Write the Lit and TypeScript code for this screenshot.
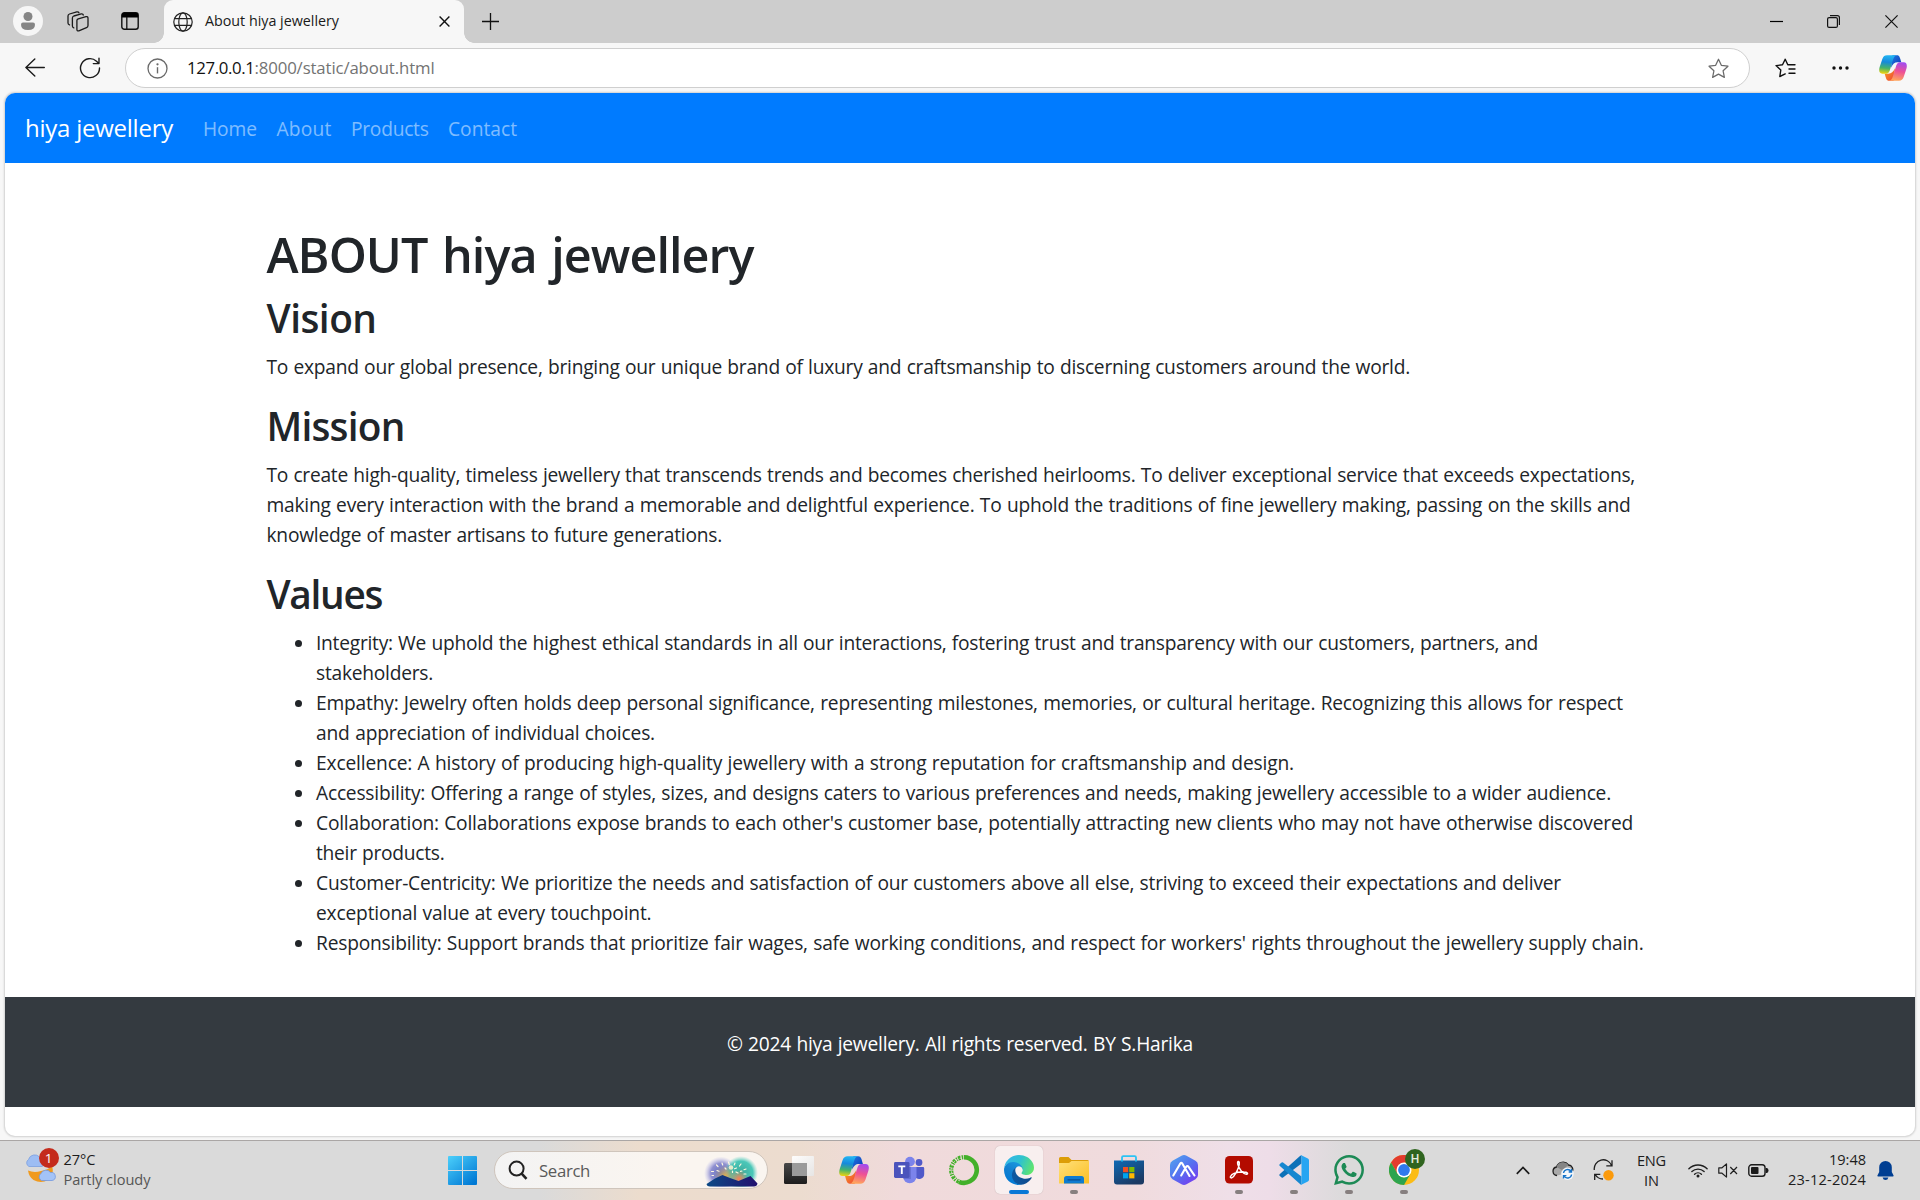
import { LitElement, html, css, TemplateResult } from "lit";

/** Text run that spreads its letters so that the run takes a given width. */
class FitText extends LitElement {
  static properties = { w: { type: Number } };
  declare w: number;
  static styles = css`
    :host { display: inline-block; white-space: nowrap; }
    .run { display: inline-block; white-space: nowrap; }
  `;
  firstUpdated() {
    const run = this.renderRoot.querySelector(".run") as HTMLElement;
    const n = (this.textContent || "").length;
    const natural = run.getBoundingClientRect().width;
    if (this.w && n) this.style.letterSpacing = `${(this.w - natural) / n}px`;
  }
  render() {
    return html`<span class="run"><slot></slot></span>`;
  }
}
customElements.define("fit-text", FitText);

const t = (text: string, w: number) => html`<fit-text w=${w}>${text}</fit-text>`;

const copilot = (id: string, w: number, h: number) => html`
  <svg width=${w} height=${h} viewBox="0 0 84 78" preserveAspectRatio="none">
    <defs>
      <linearGradient id="${id}a" x1="0.3" y1="0" x2="0.2" y2="1">
        <stop offset="0" stop-color="#22b4f2" /><stop offset=".35" stop-color="#1689dc" />
        <stop offset=".68" stop-color="#45b36b" /><stop offset="1" stop-color="#f6d50a" />
      </linearGradient>
      <linearGradient id="${id}b" x1="0.7" y1="0" x2="0.5" y2="1">
        <stop offset="0" stop-color="#a04cf2" /><stop offset=".5" stop-color="#ee5096" />
        <stop offset="1" stop-color="#ffa45c" />
      </linearGradient>
      <linearGradient id="${id}c" x1="0" y1="0" x2="1" y2="1">
        <stop offset="0" stop-color="#1e7ae0" /><stop offset="1" stop-color="#0f35b8" />
      </linearGradient>
      <linearGradient id="${id}d" x1="0" y1="0" x2="1" y2="1">
        <stop offset="0" stop-color="#f8a020" /><stop offset="1" stop-color="#ee4438" />
      </linearGradient>
    </defs>
    <path fill="url(#${id}c)" d="M40 1H54C62 1 63 9 67 22H56C46 22 42 27 36 38Z" />
    <path fill="url(#${id}d)" d="M44 77H30C22 77 21 69 17 56H28C38 56 42 51 48 40Z" />
    <path fill="url(#${id}a)" d="M24 1H52C45 3 43 12 39 25L32 47C29 55 25 56 18 56H10C0 56-1 46 2 36L10 12C13 4 17 1 24 1Z" />
    <path fill="url(#${id}b)" d="M60 77H32C39 75 41 66 45 53L52 31C55 23 59 22 66 22H74C84 22 85 32 82 42L74 66C71 74 67 77 60 77Z" />
  </svg>`;

const STAR = "M10 1.2 12.7 7 19 7.8 14.4 12.2 15.6 18.5 10 15.4 4.4 18.5 5.6 12.2 1 7.8 7.3 7Z";

const apps: { icon: TemplateResult; state?: string }[] = [
  {
    icon: html`<svg width="32" height="32" viewBox="0 0 32 32">
      <defs>
        <linearGradient id="tvb" x1="0" y1="0" x2="0" y2="1"><stop offset="0" stop-color="#484848" /><stop offset="1" stop-color="#1d1d1d" /></linearGradient>
        <linearGradient id="tvw" x1="0" y1="0" x2="1" y2="1"><stop offset="0" stop-color="#fff" /><stop offset="1" stop-color="#e6e6e6" /></linearGradient>
      </defs>
      <rect x="1" y="9" width="23" height="21" rx="1.5" fill="url(#tvb)" />
      <rect x="9" y="2" width="22" height="20" rx="1" fill="url(#tvw)" opacity=".93" />
      <path d="M9 9H24V22H10Q9 22 9 21Z" fill="#9b9b9b" />
    </svg>`,
  },
  { icon: html`${copilot("cb", 30, 28)}` },
  {
    icon: html`<svg width="32" height="32" viewBox="0 0 32 32">
      <circle cx="26" cy="8.5" r="3.4" fill="#5059c9" />
      <path d="M22 13h8q1.2 0 1.2 1.2V20a5 5 0 0 1-9 3Z" fill="#5059c9" />
      <circle cx="17" cy="7.6" r="4.9" fill="#7b83eb" />
      <path d="M10 13h13.5v9.5a6.7 6.7 0 0 1-13.5 0Z" fill="#7b83eb" />
      <path d="M10 13h8v12H10.6Z" fill="#5a62c3" opacity=".6" />
      <rect x="1" y="8" width="15.5" height="16" rx="1.4" fill="#4b53bc" />
      <path d="M5.3 12.400h7M8.800 12v8" stroke="#fff" stroke-width="1.900" fill="none" />
    </svg>`,
  },
  {
    icon: html`<svg width="32" height="32" viewBox="0 0 32 32">
      <path d="M16 3.200A12.800 12.800 0 1 1 11 27.800" fill="none" stroke="#43b02a" stroke-width="4.600" />
      <path d="M11 27.800A12.800 12.800 0 0 1 16 3.200" fill="none" stroke="#43b02a" stroke-width="4.200" stroke-dasharray="2.600 1.100 1.300 .8" />
      <path d="M11.500 26.500A11.500 11.500 0 0 1 14 4" fill="none" stroke="#f0dedc" stroke-width="1" stroke-dasharray="1.500 2.200" />
    </svg>`,
  },
  {
    state: "active",
    icon: html`<svg width="30" height="30" viewBox="0 0 256 256">
      <defs>
        <linearGradient id="e1" x1="0" y1=".5" x2="1" y2=".5"><stop offset="0" stop-color="#0c59a4" /><stop offset="1" stop-color="#114a8b" /></linearGradient>
        <linearGradient id="e2" x1=".8" y1="0" x2=".3" y2="1"><stop offset="0" stop-color="#1b9de2" /><stop offset=".5" stop-color="#1280d0" /><stop offset="1" stop-color="#0078d4" /></linearGradient>
        <linearGradient id="e3" x1="0" y1=".3" x2="1" y2=".6"><stop offset="0" stop-color="#35b5ea" /><stop offset=".5" stop-color="#2fc2cf" /><stop offset="1" stop-color="#60e56c" /></linearGradient>
      </defs>
      <path fill="url(#e1)" d="M231 190.500c-3.400 1.800-6.900 3.400-10.500 4.700a101.900 101.900 0 0 1-35.900 6.400c-47.300 0-88.500-32.500-88.500-74.300 0-11.400 6.400-21.900 16.400-27.300-42.800 1.800-53.800 46.400-53.800 72.500 0 74 68.100 81.400 82.800 81.400 7.900 0 19.800-2.300 27-4.600l1.300-.4a128.300 128.300 0 0 0 66.600-52.800 4 4 0 0 0-5.400-5.600z" />
      <path fill="url(#e2)" d="M105.700 241.400a79.200 79.200 0 0 1-22.700-21.300 80.700 80.700 0 0 1 29.500-120c3.200-1.500 8.500-4.100 15.600-4a32.400 32.400 0 0 1 25.700 13 31.900 31.900 0 0 1 6.300 18.700c0-.2 24.500-79.600-80-79.600-43.900 0-80 41.600-80 78.200a130.200 130.200 0 0 0 12.100 56 128 128 0 0 0 156.400 67 75.500 75.500 0 0 1-62.800-8z" />
      <path fill="url(#e3)" d="M152.300 148.900c-.9 1-3.400 2.500-3.400 5.600 0 2.600 1.700 5.200 4.800 7.300 14.300 10 41.400 8.600 41.500 8.600a59.600 59.600 0 0 0 30.300-8.300 61.400 61.400 0 0 0 30.400-52.900c.3-22.400-8-37.300-11.300-43.900C223.500 23.900 177.700 0 128 0A128 128 0 0 0 0 126.200c.5-36.500 36.800-66 80-66 3.500 0 23.500.3 42 10.100 16.300 8.600 24.900 19 30.800 29.200 6.200 10.700 7.300 24.100 7.300 29.500 0 5.300-2.700 13.300-7.800 19.900z" />
    </svg>`,
  },
  {
    state: "open",
    icon: html`<svg width="30" height="30" viewBox="0 0 30 30">
      <defs><linearGradient id="fe" x1="0" y1="0" x2="1" y2="1"><stop offset="0" stop-color="#ffe07a" /><stop offset="1" stop-color="#fbbf24" /></linearGradient></defs>
      <path d="M0 3.500Q0 2 1.500 2H9.500L12.500 5H28.500Q30 5 30 6.500V14H0Z" fill="#dc9d08" />
      <path d="M0 8H10L12.500 6H30V28.500H0Z" fill="url(#fe)" />
      <path d="M5 28.500V23.500Q5 21 7.500 21H22.500Q25 21 25 23.500V28.500Z" fill="#0f7bd0" />
      <path d="M9 24.800H21" stroke="#0a4f91" stroke-width="1.300" stroke-linecap="round" />
    </svg>`,
  },
  {
    icon: html`<svg width="30" height="30" viewBox="0 0 30 30">
      <defs><linearGradient id="ms" x1="0" y1="0" x2=".6" y2="1"><stop offset="0" stop-color="#1069b4" /><stop offset="1" stop-color="#1b3a63" /></linearGradient></defs>
      <path d="M8 6V2.500Q8 1.200 9.300 1.200H20.700Q22 1.200 22 2.500V6" fill="none" stroke="#2cc3f4" stroke-width="1.800" />
      <path d="M0 5.500H30V26.500Q30 29.500 27 29.500H3Q0 29.500 0 26.500Z" fill="url(#ms)" />
      <path d="M8 6.500V4.500M22 6.500V4.500" stroke="#2cc3f4" stroke-width="1.800" />
      <path fill="#f25022" d="M9 12h5.200v5.200H9z" /><path fill="#7fba00" d="M15.200 12h5.200v5.200h-5.200z" />
      <path fill="#00a4ef" d="M9 18.200h5.200v5.200H9z" /><path fill="#ffb900" d="M15.200 18.200h5.200v5.200h-5.200z" />
    </svg>`,
  },
  {
    icon: html`<svg width="30" height="30" viewBox="0 0 30 30">
      <defs><linearGradient id="ar" x1=".1" y1="0" x2=".9" y2="1"><stop offset="0" stop-color="#4fa3ee" /><stop offset=".5" stop-color="#5670f0" /><stop offset="1" stop-color="#7a35f0" /></linearGradient></defs>
      <path d="M12.500.7Q15-.6 17.500.7L26.500 5.800Q29 7.200 29 10V20Q29 22.800 26.500 24.200L17.500 29.300Q15 30.600 12.500 29.300L3.500 24.200Q1 22.800 1 20V10Q1 7.200 3.500 5.800Z" fill="url(#ar)" />
      <path d="M4.300 20.500 11.300 8.500Q12.300 7 13.300 8.500L20.500 21M12.200 20.500 17.200 11.800Q18.400 10.200 19.600 11.800L25.500 20.500" fill="none" stroke="#fff" stroke-width="2.100" stroke-linecap="round" stroke-linejoin="round" />
    </svg>`,
  },
  {
    state: "open",
    icon: html`<svg width="30" height="30" viewBox="0 0 30 30">
      <rect x="1" y="1" width="28" height="27.500" rx="4.500" fill="#b30b00" />
      <path d="M6.500 21.500C8 18.500 13.500 16.800 20 17 23.500 17 24.500 19 22.500 19.200 19 19.400 14.800 13.500 13.800 9.300 13.300 7 13.800 6.300 14.500 6.500 16 7 15.400 11 13.200 15.500 11 20 8.800 23 7.300 22.900 6.500 22.800 6.100 22.300 6.500 21.500Z" fill="none" stroke="#fff" stroke-width="1.500" stroke-linejoin="round" />
    </svg>`,
  },
  {
    state: "open",
    icon: html`<svg width="30" height="30" viewBox="0 0 30 30">
      <path d="M22.500.4V8.600L4 22.600Q3.300 23.100 2.600 22.600L.6 20.800Q0 20 .6 19.300L21 .9Z" fill="#0d71b8" />
      <path d="M22.500 29.600V21.400L4 7.400Q3.300 6.900 2.600 7.400L.6 9.200Q0 10 .6 10.700L21 29.100Z" fill="#1687d0" />
      <path d="M22.300 29.700Q21.700 29.800 21 29.200 22.500 29.600 22.500 28V2Q22.500.4 21 .8 21.700.2 22.300.3L28.900 3.500Q30 4 30 5.200V24.800Q30 26 28.900 26.500Z" fill="#27a5f2" />
    </svg>`,
  },
  {
    state: "open",
    icon: html`<svg width="30" height="30" viewBox="0 0 24 24"><path fill="#1c8a55" d="M17.472 14.382c-.297-.149-1.758-.867-2.030-.967-.273-.099-.471-.148-.67.15-.197.297-.767.966-.94 1.164-.173.199-.347.223-.644.075-.297-.15-1.255-.463-2.390-1.475-.883-.788-1.480-1.761-1.653-2.059-.173-.297-.018-.458.13-.606.134-.133.298-.347.446-.52.149-.174.198-.298.298-.497.099-.198.05-.371-.025-.52-.075-.149-.669-1.612-.916-2.207-.242-.579-.487-.5-.669-.51-.173-.008-.371-.01-.57-.01-.198 0-.52.074-.792.372-.272.297-1.040 1.016-1.040 2.479 0 1.462 1.065 2.875 1.213 3.074.149.198 2.096 3.200 5.077 4.487.709.306 1.262.489 1.694.625.712.227 1.360.195 1.871.118.571-.085 1.758-.719 2.006-1.413.248-.694.248-1.289.173-1.413-.074-.124-.272-.198-.57-.347m-5.421 7.403h-.004a9.870 9.870 0 01-5.031-1.378l-.361-.214-3.741.982.998-3.648-.235-.374a9.860 9.860 0 01-1.510-5.260c.001-5.450 4.436-9.884 9.888-9.884 2.640 0 5.122 1.030 6.988 2.898a9.825 9.825 0 012.893 6.994c-.003 5.450-4.437 9.884-9.885 9.884m8.413-18.297A11.815 11.815 0 0012.050 0C5.495 0 .16 5.335.157 11.892c0 2.096.547 4.142 1.588 5.945L.057 24l6.305-1.654a11.882 11.882 0 005.683 1.448h.005c6.554 0 11.890-5.335 11.893-11.893a11.821 11.821 0 00-3.480-8.413z" /></svg>`,
  },
  {
    state: "open",
    icon: html`<svg width="30" height="30" viewBox="0 0 30 30">
        <circle cx="15" cy="15" r="15" fill="#fbbc16" />
        <path d="M2 7.500A15 15 0 0 1 28 7.500H15L8.500 18.700Z" fill="#e33b2e" />
        <path d="M2 7.500A15 15 0 0 0 15 30L21.500 18.700 15 22.500 8.500 18.700Z" fill="#2da44e" />
        <circle cx="15" cy="15" r="7.500" fill="#fff" /><circle cx="15" cy="15" r="5.900" fill="#3079ec" />
      </svg>
      <span class="profile-badge">H</span>`,
  },
];

const values: [string, number][][] = [
  [["Integrity: We uphold the highest ethical standards in all our interactions, fostering trust and transparency with our customers, partners, and", 1222], ["stakeholders.", 117]],
  [["Empathy: Jewelry often holds deep personal significance, representing milestones, memories, or cultural heritage. Recognizing this allows for respect", 1307], ["and appreciation of individual choices.", 339]],
  [["Excellence: A history of producing high-quality jewellery with a strong reputation for craftsmanship and design.", 978]],
  [["Accessibility: Offering a range of styles, sizes, and designs caters to various preferences and needs, making jewellery accessible to a wider audience.", 1295]],
  [["Collaboration: Collaborations expose brands to each other's customer base, potentially attracting new clients who may not have otherwise discovered", 1317], ["their products.", 128.5]],
  [["Customer-Centricity: We prioritize the needs and satisfaction of our customers above all else, striving to exceed their expectations and deliver", 1245], ["exceptional value at every touchpoint.", 335.5]],
  [["Responsibility: Support brands that prioritize fair wages, safe working conditions, and respect for workers' rights throughout the jewellery supply chain.", 1327.5]],
];

class AppRoot extends LitElement {
  static styles = css`
    :host { display: block; width: 1920px; height: 1200px; overflow: hidden; background: #f7f7f7;
      font-family: "Open Sans", "Noto Sans", sans-serif; color: #212529; }
    * { box-sizing: border-box; }
    svg { display: block; flex: none; }
    .cell { display: flex; align-items: center; justify-content: center; position: relative; }

    .tabs { display: grid; grid-template-columns: 56px 43px 65px 300px 53px 1fr 57px 57px 58px; height: 43px; background: #cdcdcd; }
    .actions { padding-right: 3px; }
    .tab { position: relative; display: flex; align-items: center; height: 43px; padding: 0 14px 0 9px;
      background: #f7f7f7; border-radius: 9px 9px 0 0; color: #1a1a1a; font-size: 14.3px; }
    .tab::before, .tab::after { content: ""; position: absolute; bottom: 0; width: 10px; height: 10px; }
    .tab::before { left: -10px; background: radial-gradient(circle at 0 0, transparent 9.5px, #f7f7f7 10px); }
    .tab::after { right: -10px; background: radial-gradient(circle at 100% 0, transparent 9.5px, #f7f7f7 10px); }
    .tab-title { flex: 1; margin-left: 12px; line-height: 20px; padding-bottom: 2px; }
    .avatar { width: 30px; height: 30px; border-radius: 50%; background: #f6f6f6; display: flex; align-items: center; justify-content: center; }
    .tabs .cell { padding-bottom: 1px; }

    .toolbar { display: grid; grid-template-columns: 70px 40px 15px 1625px 70px 40px 6px 54px; height: 50px; }
    .address { grid-column: 4; align-self: center; height: 40px; border: 1.5px solid #cfcfcf; border-radius: 20px; background: #fff;
      display: flex; align-items: center; padding: 0 20px 0 21px; font-size: 16.8px; color: #737373; }
    .url { flex: 1; margin-left: 19px; line-height: 24px; padding-bottom: 1px; }
    .host { color: #111; }

    .page { margin: 0 5px; height: 1043px; background: #fff; border-radius: 10px; overflow: hidden;
      box-shadow: 0 0 2px 1px rgba(0, 0, 0, .16); display: flex; flex-direction: column; }
    .navbar { height: 70px; background: #007bff; display: flex; align-items: center; padding-left: 20px; font-size: 19.2px; color: rgba(255, 255, 255, .5); }
    .brand { font-size: 24px; color: #fff; margin-right: 30px; line-height: 36px; }
    .links { display: flex; gap: 19.5px; line-height: 30px; padding-top: 1px; }
    .content { padding: 59px 0 0 261.5px; height: 834px; font-size: 19.2px; line-height: 30px; word-spacing: .6px; }
    h1 { margin: 0 0 8px; padding-top: 2px; font-size: 48.5px; line-height: 60px; font-weight: 600; word-spacing: 3px; }
    h2 { margin: 0 0 8px; padding-top: 2px; font-size: 38.8px; line-height: 48px; font-weight: 600; }
    p { margin: 0 0 18px; padding-top: 2px; }
    .line { display: block; height: 30px; white-space: nowrap; }
    ul { margin: 0; padding: 2px 0 0 49.5px; list-style: none; }
    li { position: relative; }
    li::before { content: ""; position: absolute; left: -21px; top: 12px; width: 7px; height: 7px; border-radius: 50%; background: #212529; }
    .footer { height: 110px; background: #343a40; color: #fff; font-size: 19.2px; line-height: 30px; padding-top: 32px; text-align: center; word-spacing: .6px; }

    .taskbar { margin-top: 4px; height: 60px; border-top: 1px solid #aaa6a5; color: #1d1d1d; font-size: 14.6px;
      display: grid; grid-template-columns: 435px 55px 281.5px 660px 1fr 40px 40px 40px 57px 36px 24px 36px 90px 38px 16px;
      background: linear-gradient(90deg, #dadada 0, #dadada 540px, #ecdccd 640px, #ecdccf 800px, #f0dadb 900px, #f0dbdd 1130px, #efdfe8 1230px, #eedde8 1270px, #dadada 1350px, #dadada 100%); }
    .weather { display: flex; padding: 8px 0 0 23.5px; }
    .weather-icon { position: relative; width: 40px; height: 40px; padding-top: 2px; }
    .count { position: absolute; left: 15px; top: -1px; width: 20px; height: 20px; border-radius: 50%; background: #c42b1c; color: #fff;
      font-size: 13.5px; line-height: 20px; text-align: center; }
    .stack { display: flex; flex-direction: column; line-height: 20px; }
    .muted { color: #565656; }
    .search { margin: 10px 3.5px 11px 4px; border-radius: 20px; background: linear-gradient(90deg, #f3f3f3, #faf5f0 60%); border: 1px solid #cfc5bc;
      display: flex; align-items: center; padding: 0 8px 0 13px; font-size: 16.8px; color: #5a5a5a; overflow: hidden; }
    .search-label { flex: 1; margin-left: 11px; line-height: 24px; padding-top: 1px; }
    .apps { display: grid; grid-template-columns: repeat(12, 55px); }
    .app { position: relative; display: flex; align-items: center; justify-content: center; }
    .tile { position: relative; display: flex; align-items: center; justify-content: center; width: 48px; height: 48px; border-radius: 5px; margin-bottom: 1px; }
    .active .tile { background: #f8efef; box-shadow: 0 0 1px rgba(0, 0, 0, .25); }
    .active .tile::after, .open .tile::after { content: ""; position: absolute; bottom: 0; height: 4px; border-radius: 2px; }
    .active .tile::after { width: 20px; left: 14px; background: #0a78d6; }
    .open .tile::after { width: 8px; left: 20px; background: #867f7f; }
    .profile-badge { position: absolute; left: 25px; top: 3px; width: 20px; height: 20px; border-radius: 50%; background: #2f641f; color: #e4ecdf;
      font-size: 12px; line-height: 20px; text-align: center; font-family: Roboto, sans-serif; font-weight: 500; }
    .tray { padding-bottom: 1px; }
    .text { padding-top: 9px; align-items: flex-start; }
    .lang .stack { align-items: center; }
    .clock { padding-top: 8px; justify-content: flex-end; }
    .clock .stack { align-items: flex-end; }
  `;

  render() {
    return html`
      <div class="tabs">
        <div class="cell"><div class="avatar"><svg width="14" height="18" viewBox="0 0 14 18" fill="#868686"><circle cx="7" cy="4.500" r="4.500" /><path d="M2 10.500H12Q14 10.500 14 12.500 14 18 7 18 0 18 0 12.500 0 10.500 2 10.500Z" /></svg></div></div>
        <div class="cell"><svg width="22" height="21" viewBox="0 0 22 21" fill="none" stroke="#1b1b1b" stroke-width="1.300" stroke-linejoin="round" stroke-linecap="round">
          <path d="M11.300 7.900 19 5.700Q21 5.300 21 7.200V14.500Q21 16.100 19.500 16.600L11.800 19.800Q9.900 20.300 9.900 18.500V9.600Q9.900 8.300 11.300 7.900Z" />
          <path d="M6.800 16.800Q5.400 16.500 5.400 15V6.900Q5.400 5.500 6.800 5L14.300 2.900Q16 2.600 16.300 4" />
          <path d="M2.500 13.800Q1 13.500 1 12V4.900Q1 3.500 2.500 3L9.800.9Q11.500.6 11.900 1.800" /></svg></div>
        <div class="cell actions"><svg width="18" height="18" viewBox="0 0 18 18"><rect x=".8" y=".8" width="16.400" height="16.400" rx="2.500" fill="none" stroke="#111" stroke-width="1.400" /><path d="M.8 5.600V3Q.8.800 3 .8H15Q17.200.8 17.200 3V5.600Z" fill="#000" /><path d="M5.800 5V17" stroke="#111" stroke-width="1.300" /></svg></div>
        <div class="tab">
          <svg width="20" height="20" viewBox="0 0 20 20" fill="none" stroke="#222" stroke-width="1.200"><circle cx="10" cy="10" r="9.200" /><ellipse cx="10" cy="10" rx="4.200" ry="9.200" /><path d="M1.700 6.600H18.300M1.700 13.400H18.300" /></svg>
          <div class="tab-title">${t("About hiya jewellery", 134)}</div>
          <svg width="11" height="11" viewBox="0 0 11 11" stroke="#111" stroke-width="1.400"><path d="M.6.600 10.400 10.400M10.400.600.600 10.400" /></svg>
        </div>
        <div class="cell"><svg width="17" height="17" viewBox="0 0 17 17" stroke="#111" stroke-width="1.300"><path d="M8.500 0V17M0 8.500H17" /></svg></div>
        <div></div>
        <div class="cell"><svg width="13" height="13" viewBox="0 0 13 13" stroke="#000" stroke-width="1.200"><path d="M0 6.500H13" /></svg></div>
        <div class="cell"><svg width="13" height="13" viewBox="0 0 13 13" fill="none" stroke="#111" stroke-width="1.200"><rect x=".6" y="2.600" width="9.800" height="9.800" rx="1.500" /><path d="M3 .6H10.400Q12.400.6 12.400 2.600V10" /></svg></div>
        <div class="cell"><svg width="13" height="13" viewBox="0 0 13 13" stroke="#111" stroke-width="1.200"><path d="M.4.400 12.600 12.600M12.600.400.400 12.600" /></svg></div>
      </div>

      <div class="toolbar">
        <div class="cell"><svg width="20" height="20" viewBox="0 0 20 20" fill="none" stroke="#1b1b1b" stroke-width="1.400" stroke-linecap="round" stroke-linejoin="round"><path d="M19.300 9.500H.9M9.800.900.900 9.500 9.800 18.100" /></svg></div>
        <div class="cell"><svg width="22" height="22" viewBox="0 0 22 22" fill="none" stroke="#1b1b1b" stroke-width="1.400" stroke-linecap="round" stroke-linejoin="round"><path d="M20.500 11A9.500 9.500 0 1 1 17.500 4.200L19.800 6.500M20 1.200V6.600H14.300" /></svg></div>
        <div class="address">
          <svg width="21" height="21" viewBox="0 0 21 21" fill="none" stroke="#6a6a6a" stroke-width="1.300"><circle cx="10.500" cy="10.500" r="9.500" /><path d="M10.500 9.200V15.400" stroke-width="1.400" /><circle cx="10.500" cy="6.300" r=".5" fill="#6a6a6a" /></svg>
          <div class="url"><span class="host">${t("127.0.0.1", 67.5)}</span>${t(":8000/static/about.html", 180)}</div>
          <svg width="21" height="21" viewBox="0 0 20 20" fill="none" stroke="#6b6b6b" stroke-width="1.200" stroke-linejoin="round"><path d=${STAR} /></svg>
        </div>
        <div class="cell"><svg width="21" height="20" viewBox="0 0 21 20" fill="none" stroke="#111" stroke-width="1.400" stroke-linejoin="round" stroke-linecap="round"><path d="M12.800 6.700 10.200 1.200 7.500 6.800 1 7.600 5.800 12 4.800 18.500 10.200 15.900M12.800 6.700H20M14 11H20M14 15.200H20" /></svg></div>
        <div class="cell"><svg width="17" height="4" viewBox="0 0 17 4" fill="#111"><circle cx="2" cy="2" r="1.700" /><circle cx="8.500" cy="2" r="1.700" /><circle cx="15" cy="2" r="1.700" /></svg></div>
        <div></div>
        <div class="cell">${copilot("ca", 28, 26)}</div>
      </div>

      <div class="page">
        <div class="navbar">
          <div class="brand">${t("hiya jewellery", 148)}</div>
          <div class="links">${t("Home", 54)}${t("About", 55)}${t("Products", 77.5)}${t("Contact", 69)}</div>
        </div>
        <div class="content">
          <h1>${t("ABOUT hiya jewellery", 487)}</h1>
          <h2>${t("Vision", 110)}</h2>
          <p><span class="line">${t("To expand our global presence, bringing our unique brand of luxury and craftsmanship to discerning customers around the world.", 1143.5)}</span></p>
          <h2>${t("Mission", 138)}</h2>
          <p>
            <span class="line">${t("To create high-quality, timeless jewellery that transcends trends and becomes cherished heirlooms. To deliver exceptional service that exceeds expectations,", 1368.5)}</span>
            <span class="line">${t("making every interaction with the brand a memorable and delightful experience. To uphold the traditions of fine jewellery making, passing on the skills and", 1364)}</span>
            <span class="line">${t("knowledge of master artisans to future generations.", 455.5)}</span>
          </p>
          <h2>${t("Values", 115.5)}</h2>
          <ul>
            ${values.map((v) => html`<li>${v.map(([s, w]) => html`<span class="line">${t(s, w)}</span>`)}</li>`)}
          </ul>
        </div>
        <div class="footer">${t("© 2024 hiya jewellery. All rights reserved. BY S.Harika", 466)}</div>
      </div>

      <div class="taskbar">
        <div class="weather">
          <div class="weather-icon">
            <svg width="34" height="34" viewBox="0 0 34 34">
              <path d="M4 19.500Q10 22 17 20Q24 19 28 14.500 31 25 24 29 17 33 9.500 29 5 26 4 19.500Z" fill="#f09a1e" />
              <path d="M5 15.500A4 4 0 0 1 4.500 8.500 6.500 6.500 0 0 1 15.500 6 5 5 0 0 1 18 15.500Z" fill="#9dbdf3" stroke="#7c9fe0" stroke-width=".8" />
              <path d="M17.500 29.500A4 4 0 0 1 17 22.500 5.500 5.500 0 0 1 26.500 21.500 4 4 0 0 1 28 29.500Z" fill="#a3c3f7" stroke="#7298e0" stroke-width=".8" />
            </svg>
            <span class="count">1</span>
          </div>
          <div class="stack"><span>${t("27°C", 32)}</span><span class="muted">${t("Partly cloudy", 87)}</span></div>
        </div>
        <div class="cell tray"><svg width="29" height="29" viewBox="0 0 29 29">
          <defs><linearGradient id="wn" gradientUnits="userSpaceOnUse" x1="0" y1="0" x2="24" y2="29"><stop offset="0" stop-color="#4cd0fb" /><stop offset="1" stop-color="#0078d4" /></linearGradient></defs>
          <path fill="url(#wn)" d="M1 0H14V14H0V1Q0 0 1 0ZM15 0H28Q29 0 29 1V14H15ZM0 15H14V29H1Q0 29 0 28ZM15 15H29V28Q29 29 28 29H15Z" /></svg></div>
        <div class="search">
          <svg width="20" height="20" viewBox="0 0 20 20" fill="none" stroke="#222" stroke-width="2"><circle cx="8.600" cy="8.600" r="7" /><path d="M13.200 13.200 18.500 18.800" stroke-width="2.600" /></svg>
          <span class="search-label">${t("Search", 51)}</span>
          <svg width="56" height="34" viewBox="0 0 56 34">
            <defs>
              <radialGradient id="g1"><stop offset="0" stop-color="#5f6ec0" /><stop offset=".6" stop-color="#7476c8" stop-opacity=".8" /><stop offset="1" stop-color="#b0b0ea" stop-opacity="0" /></radialGradient>
              <radialGradient id="g2"><stop offset="0" stop-color="#3fa89a" /><stop offset=".7" stop-color="#2cbfae" stop-opacity=".85" /><stop offset="1" stop-color="#6cd4c6" stop-opacity="0" /></radialGradient>
              <radialGradient id="g3"><stop offset="0" stop-color="#ff7a52" /><stop offset="1" stop-color="#e8a060" stop-opacity="0" /></radialGradient>
              <radialGradient id="g5"><stop offset="0" stop-color="#e0b24a" /><stop offset="1" stop-color="#c0a070" stop-opacity="0" /></radialGradient>
              <linearGradient id="g4" x1="0" y1="0" x2="1" y2="0"><stop offset="0" stop-color="#0b4a86" /><stop offset="1" stop-color="#22106e" /></linearGradient>
            </defs>
            <circle cx="18" cy="20.500" r="17" fill="url(#g1)" /><circle cx="38" cy="20" r="17" fill="url(#g2)" />
            <circle cx="22" cy="23" r="11" fill="url(#g5)" /><circle cx="36" cy="26" r="9" fill="url(#g3)" />
            <path d="M3.500 31 12 25.500 19.500 22 27 25 35.500 28 47.500 23 54.500 30.500Q54 33.500 51 33.500H7Q4 33.500 3.500 31Z" fill="url(#g4)" />
            <circle cx="28" cy="14.500" r="2.300" fill="#fff3cf" opacity=".85" />
            <path d="M8.500 18.500h2M13.500 12l1.500 1.500M19 10l.7 2M25.500 9l.8 2.500M32 10l-.8 2M38 11l-1.500 2M43 16l-2 .7M43 21h-2M14 17.500l2 .7M22 15l1 1M33.500 15l-2 .7M35 20l-2-1M29.500 19.500v-1.500M9 22.500h1.500M39 18l-1.500.3" stroke="#fff8df" stroke-width="1.200" stroke-linecap="round" />
          </svg>
        </div>
        <div class="apps">
          ${apps.map((a) => html`<div class="app ${a.state ?? ""}"><div class="tile">${a.icon}</div></div>`)}
        </div>
        <div></div>
        <div class="cell tray"><svg width="14" height="9" viewBox="0 0 14 9" fill="none" stroke="#1b1b1b" stroke-width="1.700"><path d="M.8 7.800 7 1.500 13.200 7.800" /></svg></div>
        <div class="cell tray"><svg width="22" height="20" viewBox="0 0 22 20">
          <path d="M5 15.500A4.300 4.300 0 0 1 4.500 7 6.800 6.800 0 0 1 16.500 5 4.500 4.500 0 0 1 20 12" fill="#a9a9a9" stroke="#1f1f1f" stroke-width="1.300" />
          <path d="M4.500 7A6.800 6.800 0 0 1 16.500 5L10 10Z" fill="#858585" />
          <circle cx="15.500" cy="13.800" r="6.200" fill="#f4f8fc" />
          <path d="M11.500 13A4.100 4.100 0 0 1 19 11.500M19.600 14.500A4.100 4.100 0 0 1 12 16M19.500 9V12H16.700M11.500 18.500V15.600H14.400" fill="none" stroke="#1673c8" stroke-width="1.400" /></svg></div>
        <div class="cell tray"><svg width="21" height="22" viewBox="0 0 21 22" fill="none" stroke="#1f1f1f" stroke-width="1.300">
          <path d="M1.300 11A9 9 0 0 1 18.600 6.500M19 1.200V6.800H13.300M10 20A9 9 0 0 1 2.200 15.500M1.700 21V15.300H7.300" /><circle cx="15.500" cy="16.200" r="5.200" fill="#fb9a0b" stroke="none" /></svg></div>
        <div class="cell text lang"><div class="stack"><span>${t("ENG", 29)}</span><span>${t("IN", 15)}</span></div></div>
        <div class="cell tray"><svg width="20" height="15" viewBox="0 0 20 15" fill="none" stroke="#1f1f1f" stroke-width="1.400" stroke-linecap="round"><path d="M.9 5.800A12.800 12.800 0 0 1 19.100 5.800M3.900 8.600A8.700 8.700 0 0 1 16.100 8.600M6.600 11.200A4.900 4.900 0 0 1 13.400 11.200" /><circle cx="10" cy="13" r="1.500" fill="#1f1f1f" stroke="none" /></svg></div>
        <div class="cell tray"><svg width="20" height="15" viewBox="0 0 20 15" fill="none" stroke="#1f1f1f" stroke-width="1.200" stroke-linejoin="round"><path d="M.8 4.800H4L8.500.900V14.100L4 10.200H.8ZM12.300 4 19 11M19 4 12.300 11" /></svg></div>
        <div class="cell tray"><svg width="21" height="13" viewBox="0 0 21 13"><rect x=".8" y=".8" width="16.200" height="11.400" rx="2.800" fill="none" stroke="#1b1b1b" stroke-width="1.400" /><rect x="3" y="3" width="7.500" height="7" rx="1" fill="#1b1b1b" /><path d="M17.600 4H18.800Q20.500 4.300 20.500 6.500 20.500 8.700 18.800 9H17.600Z" fill="#1b1b1b" /></svg></div>
        <div class="cell text clock"><div class="stack"><span>${t("19:48", 37)}</span><span>${t("23-12-2024", 78)}</span></div></div>
        <div class="cell tray"><svg width="17" height="19" viewBox="0 0 17 19" fill="#003e92"><path d="M8.500 0A6.300 6.300 0 0 1 14.800 6.300V11L16.600 14.500Q16.800 15.500 15.800 15.500H1.200Q.2 15.500.4 14.500L2.200 11V6.300A6.300 6.300 0 0 1 8.500 0ZM5.600 16.500H11.400Q10.800 19 8.500 19 6.200 19 5.600 16.500Z" /></svg></div>
        <div></div>
      </div>
    `;
  }
}
customElements.define("app-root", AppRoot);
